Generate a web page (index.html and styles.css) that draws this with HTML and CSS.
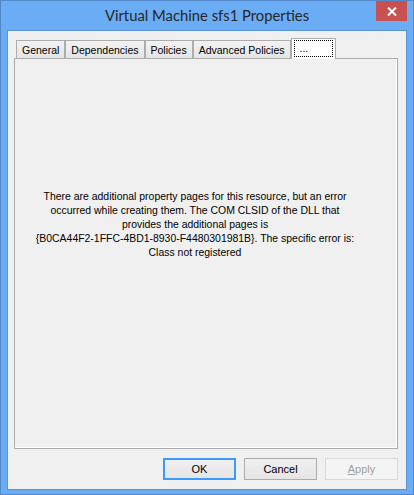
FILE: index.html
```html
<!DOCTYPE html>
<html lang="en">
<head>
  <meta charset="UTF-8" />
  <title>Virtual Machine sfs1 Properties</title>
  <link rel="stylesheet" href="styles.css">
</head>
<body>

  <div class="window">
    <div class="titlebar">
      <span></span>
      <div class="title">Virtual Machine sfs1 Properties</div>
      <div class="caption-btns">
        <button class="close-btn" title="Close">
          <svg width="10" height="9" viewBox="0 0 10 9">
            <path d="M1 0.5 L9 8.5 M9 0.5 L1 8.5" stroke="#fff" stroke-width="2" fill="none"/>
          </svg>
        </button>
      </div>
    </div>

    <div class="client">
      <div class="tabs">
        <div class="tab">General</div>
        <div class="tab">Dependencies</div>
        <div class="tab">Policies</div>
        <div class="tab">Advanced Policies</div>
        <div class="tab selected"><span class="focus-rect">...</span></div>
      </div>

      <div class="panel">
        <p class="message">
          There are additional property pages for this resource, but an error<br>
          occurred while creating them. The COM CLSID of the DLL that<br>
          provides the additional pages is<br>
          {B0CA44F2-1FFC-4BD1-8930-F4480301981B}. The specific error is:<br>
          Class not registered
        </p>
      </div>

      <div class="buttons">
        <button class="btn default">OK</button>
        <button class="btn">Cancel</button>
        <button class="btn" disabled><u>A</u>pply</button>
      </div>
    </div>
  </div>

</body>
</html>
```

FILE: styles.css
```css
* { margin: 0; padding: 0; box-sizing: border-box; }

body {
  background: #6badf4;
  font-family: 'Liberation Sans', Arial, sans-serif;
}

.window {
  width: 414px;
  height: 495px;
  background: #6badf4;
  border: 1px solid #5588c8;
  padding: 0 6px 4px 6px;
  display: flex;
  flex-direction: column;
}

.titlebar {
  height: 29px;
  display: grid;
  grid-template-columns: 1fr auto 1fr;
  align-items: start;
}

.title {
  font-family: 'Lato', 'Liberation Sans', sans-serif;
  font-size: 14.8px;
  color: #262626;
  padding-top: 5px;
  white-space: nowrap;
}

.caption-btns {
  display: flex;
  justify-content: flex-end;
}

.close-btn {
  width: 31px;
  height: 20px;
  background: #c75050;
  border: none;
  display: flex;
  align-items: center;
  justify-content: center;
}

.client {
  flex: 1;
  background: #f0f0f0;
  border: 1px solid #5b93d6;
  padding: 7px 8px 0 6px;
  display: flex;
  flex-direction: column;
}

.tabs {
  display: flex;
  align-items: flex-end;
  height: 20px;
  padding-left: 2px;
  position: relative;
  z-index: 1;
}

.tab {
  height: 18px;
  padding: 0 5px;
  font-size: 10.5px;
  line-height: 18px;
  color: #000;
  border: 1px solid #acacac;
  border-bottom: none;
  background: linear-gradient(#f2f2f2, #e5e5e5);
  white-space: nowrap;
}

.tab.selected {
  height: 21px;
  width: 45px;
  margin-bottom: -1px;
  background: #fff;
  padding: 1px 2px 0 2px;
}

.focus-rect {
  display: block;
  height: 17px;
  border: 1px dotted #000;
  padding-left: 5px;
  line-height: 15px;
  font-size: 10.5px;
}

.panel {
  height: 391px;
  border: 1px solid #acacac;
  box-shadow: inset -1px -1px 0 #fff;
  background: #f0f0f0;
  padding: 131px 32px 0 10px;
}

.message {
  font-size: 10.45px;
  line-height: 14px;
  text-align: center;
  color: #000;
}

.buttons {
  margin-top: 9px;
  display: flex;
  justify-content: flex-end;
  gap: 8px;
}

.btn {
  width: 73px;
  height: 22px;
  font-family: 'Liberation Sans', Arial, sans-serif;
  font-size: 11px;
  color: #000;
  background: linear-gradient(#f0f0f0, #e5e5e5);
  border: 1px solid #acacac;
}

.btn.default {
  border: 2px solid #3c9aff;
}

.btn:disabled {
  background: #f4f4f4;
  border-color: #d9d9d9;
  color: #a0a0a0;
}
```
